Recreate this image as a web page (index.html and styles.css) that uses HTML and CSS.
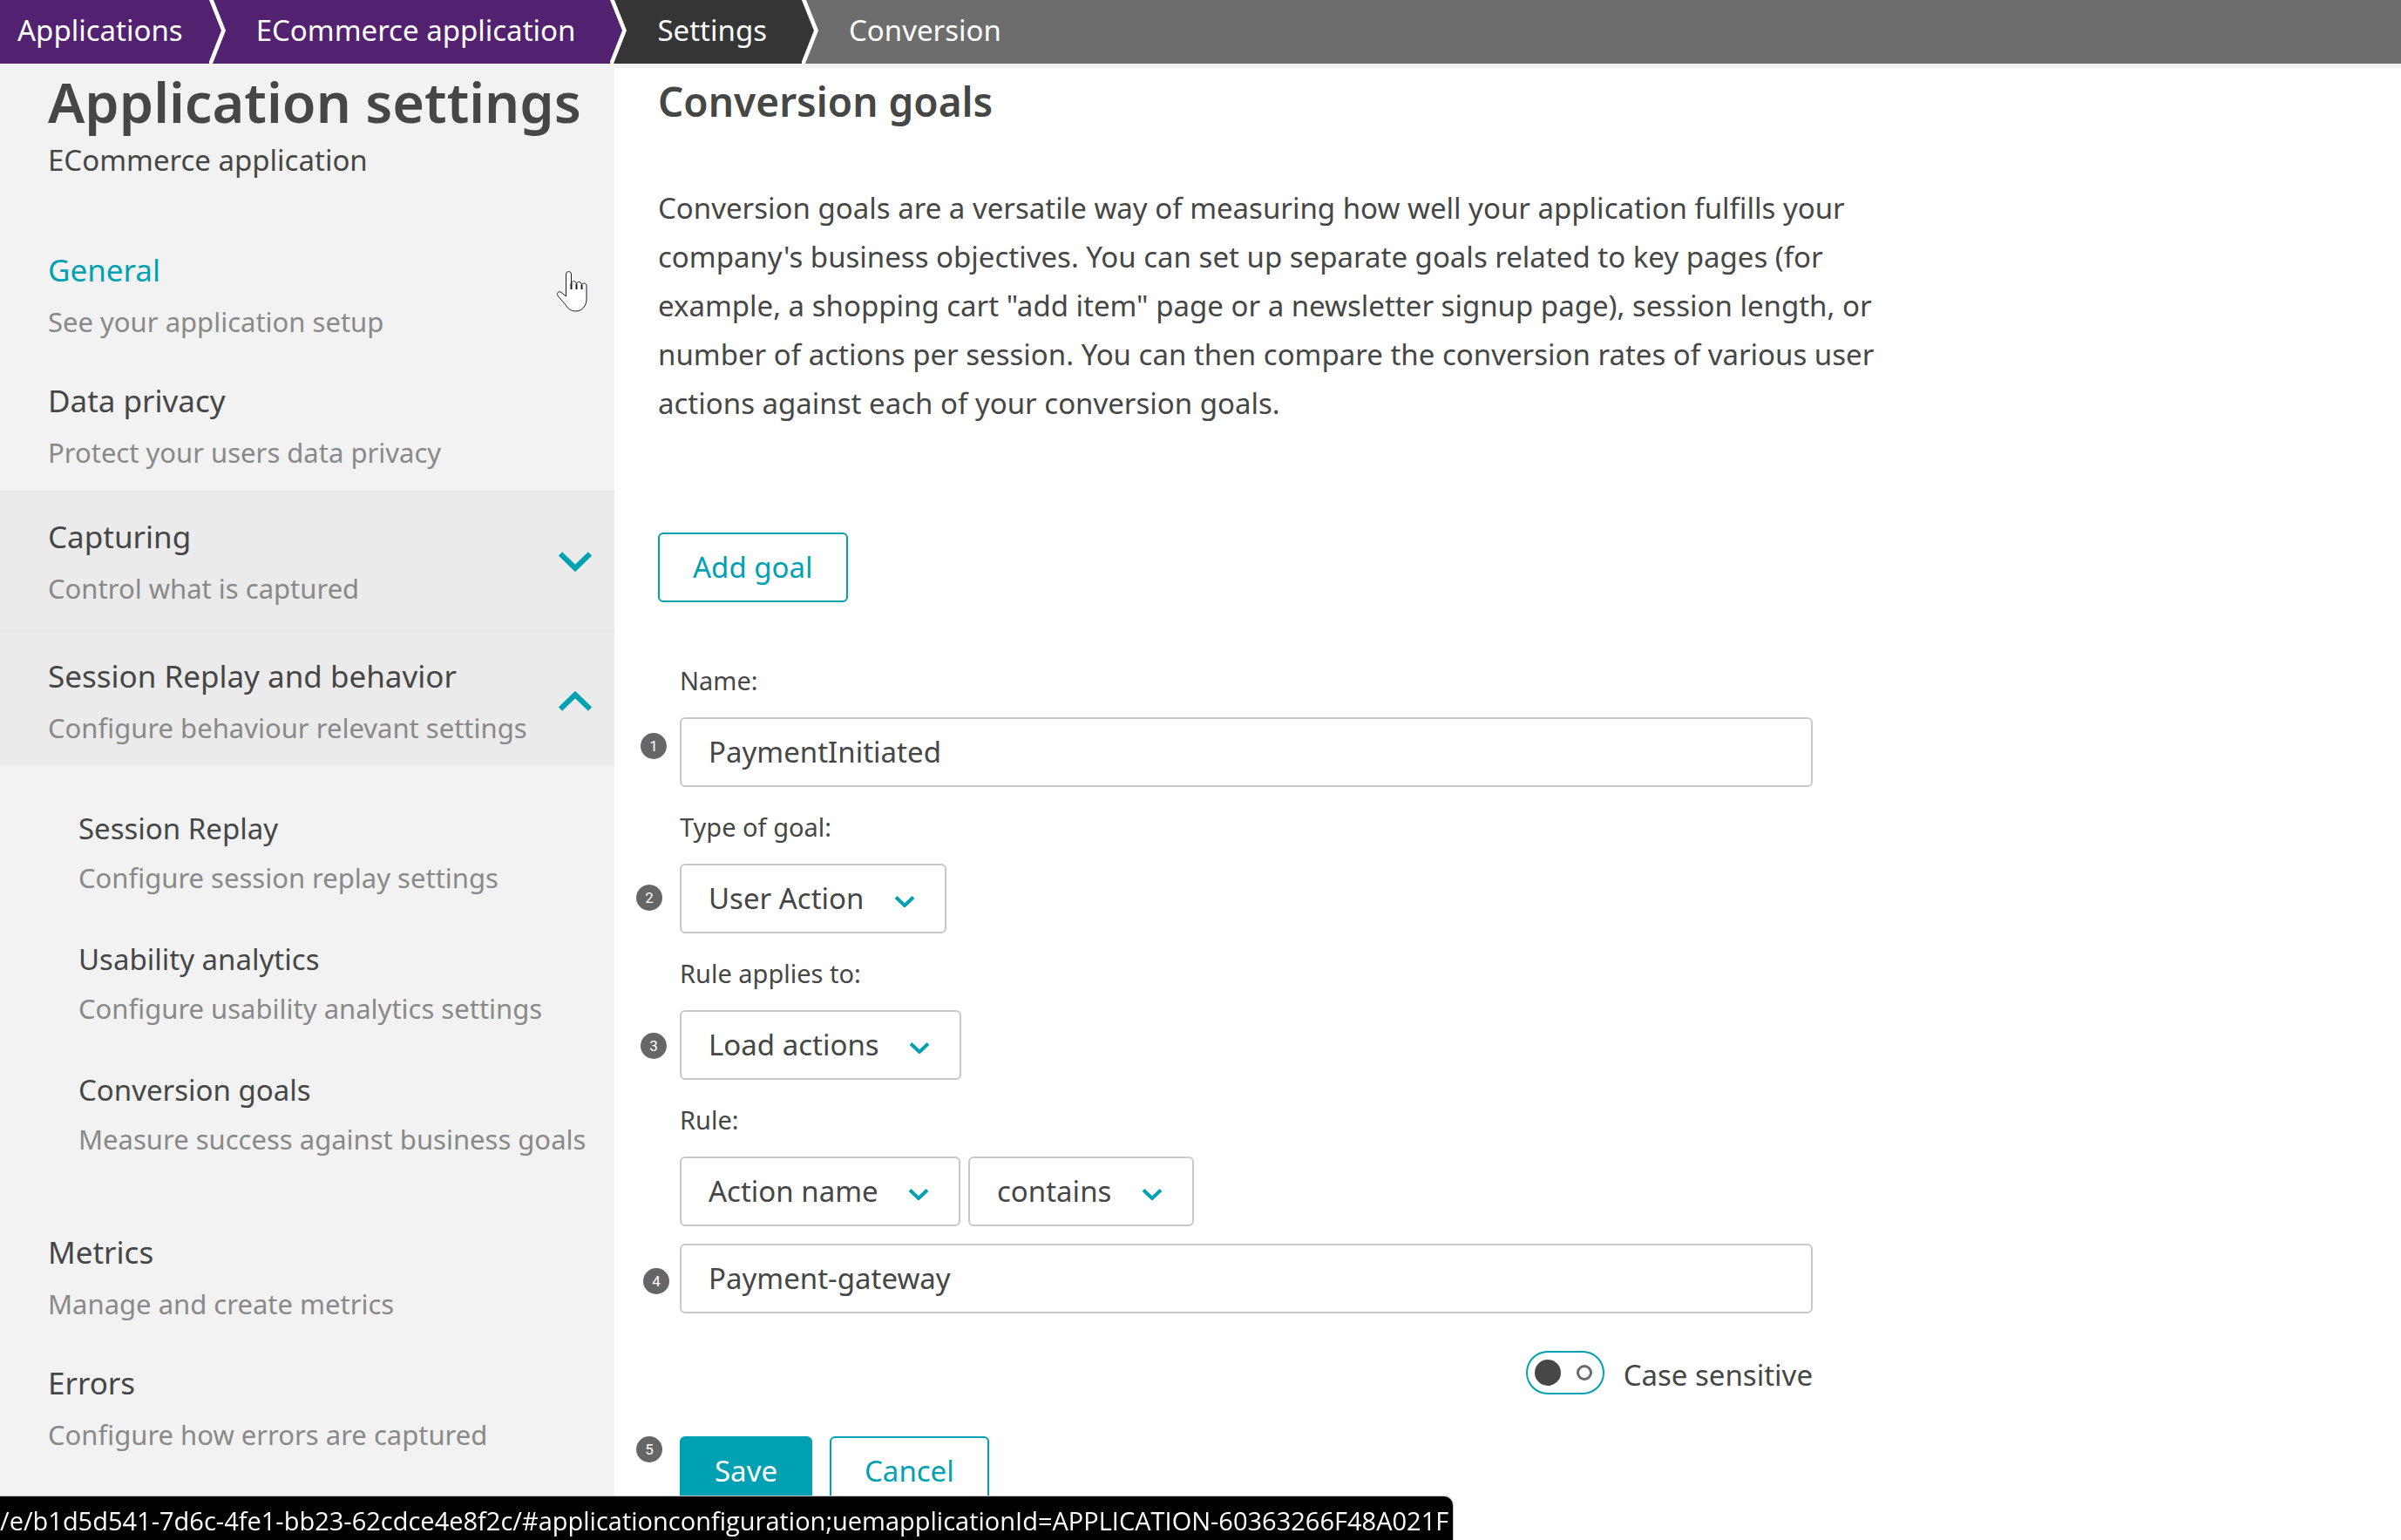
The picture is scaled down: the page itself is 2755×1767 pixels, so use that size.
FILE: index.html
```html
<!DOCTYPE html>
<html lang="en">
<head>
<meta charset="utf-8">
<title>Conversion goals - Application settings</title>
<link rel="stylesheet" href="styles.css">
</head>
<body>
<nav class="breadcrumb" aria-label="Breadcrumb">
  <a class="crumb crumb-app crumb-first" href="#applications">Applications</a>
  <svg class="crumb-sep sep-app" viewBox="0 0 19 73" aria-hidden="true"><path class="fill-app" d="M0 0L14 35L0 73Z"/><path class="fill-line" d="M0 0H5L19 35L4 73H-1L14 35Z"/></svg>
  <a class="crumb crumb-app" href="#ecommerce">ECommerce application</a>
  <svg class="crumb-sep sep-settings" viewBox="0 0 19 73" aria-hidden="true"><path class="fill-app" d="M0 0L14 35L0 73Z"/><path class="fill-line" d="M0 0H5L19 35L4 73H-1L14 35Z"/></svg>
  <a class="crumb crumb-settings" href="#settings">Settings</a>
  <svg class="crumb-sep sep-current" viewBox="0 0 19 73" aria-hidden="true"><path class="fill-settings" d="M0 0L14 35L0 73Z"/><path class="fill-line" d="M0 0H5L19 35L4 73H-1L14 35Z"/></svg>
  <a class="crumb" href="#conversion" aria-current="page">Conversion</a>
</nav>

<div class="layout">
  <aside class="sidebar">
    <header class="sidebar-head">
      <h1 class="sidebar-title">Application settings</h1>
      <p class="sidebar-subtitle">ECommerce application</p>
    </header>
    <nav aria-label="Settings">
      <a class="nav-item" href="#general">
        <span class="nav-title nav-title-active">General</span>
        <span class="nav-desc">See your application setup</span>
        <svg class="pointer" viewBox="0 0 37 48" aria-hidden="true">
          <path class="pointer-hand" d="M11.500 30V5a3 3.500 0 0 1 6 0V16C18 11.500 23 11.500 23.500 16C24 12.500 29 12.500 29.500 17C30.500 14 35 14.500 35 18V33C35 41 30 47 22.500 47C16 47 13 43 10.500 39L2.500 30C0 26 3 23.500 6 25.500Z"/>
          <path class="pointer-lines" d="M17.500 15V22M23.500 16V22M29.500 17V22"/>
        </svg>
      </a>
      <a class="nav-item" href="#privacy">
        <span class="nav-title">Data privacy</span>
        <span class="nav-desc">Protect your users data privacy</span>
      </a>
      <button class="nav-group" type="button" aria-expanded="false">
        <span class="nav-group-text">
          <span class="nav-title">Capturing</span>
          <span class="nav-desc">Control what is captured</span>
        </span>
        <svg class="nav-chevron" viewBox="0 0 38 23" aria-hidden="true"><path d="M2 2.500L19 19L36 2.500"/></svg>
      </button>
      <button class="nav-group nav-group-open" type="button" aria-expanded="true">
        <span class="nav-group-text">
          <span class="nav-title">Session Replay and behavior</span>
          <span class="nav-desc">Configure behaviour relevant settings</span>
        </span>
        <svg class="nav-chevron" viewBox="0 0 38 23" aria-hidden="true"><path d="M2 20.500L19 4L36 20.500"/></svg>
      </button>
      <div class="subnav">
        <a class="subnav-item" href="#replay">
          <span class="subnav-title">Session Replay</span>
          <span class="nav-desc">Configure session replay settings</span>
        </a>
        <a class="subnav-item" href="#usability">
          <span class="subnav-title">Usability analytics</span>
          <span class="nav-desc">Configure usability analytics settings</span>
        </a>
        <a class="subnav-item" href="#goals">
          <span class="subnav-title">Conversion goals</span>
          <span class="nav-desc">Measure success against business goals</span>
        </a>
      </div>
      <a class="nav-item" href="#metrics">
        <span class="nav-title">Metrics</span>
        <span class="nav-desc">Manage and create metrics</span>
      </a>
      <a class="nav-item" href="#errors">
        <span class="nav-title">Errors</span>
        <span class="nav-desc">Configure how errors are captured</span>
      </a>
    </nav>
  </aside>

  <main class="content">
    <h2 class="content-title">Conversion goals</h2>
    <p class="intro">Conversion goals are a versatile way of measuring how well your application fulfills your company's business objectives. You can set up separate goals related to key pages (for example, a shopping cart "add item" page or a newsletter signup page), session length, or number of actions per session. You can then compare the conversion rates of various user actions against each of your conversion goals.</p>
    <button class="button" type="button">Add goal</button>

    <form class="goal-form">
      <label class="label" for="goal-name">Name:</label>
      <div class="row">
        <span class="pin pin-1">1</span>
        <input class="input" id="goal-name" type="text" value="PaymentInitiated">
      </div>

      <label class="label" for="goal-type">Type of goal:</label>
      <div class="row">
        <span class="pin pin-2">2</span>
        <span class="select-wrap">
          <select class="select" id="goal-type"><option>User Action</option></select>
          <svg class="select-chevron" viewBox="0 0 22 13" aria-hidden="true"><path d="M1 1.500L11 11L21 1.500"/></svg>
        </span>
      </div>

      <label class="label" for="rule-scope">Rule applies to:</label>
      <div class="row">
        <span class="pin pin-3">3</span>
        <span class="select-wrap">
          <select class="select" id="rule-scope"><option>Load actions</option></select>
          <svg class="select-chevron" viewBox="0 0 22 13" aria-hidden="true"><path d="M1 1.500L11 11L21 1.500"/></svg>
        </span>
      </div>

      <label class="label" for="rule-field">Rule:</label>
      <div class="row">
        <span class="select-wrap">
          <select class="select" id="rule-field"><option>Action name</option></select>
          <svg class="select-chevron" viewBox="0 0 22 13" aria-hidden="true"><path d="M1 1.500L11 11L21 1.500"/></svg>
        </span>
        <span class="select-wrap">
          <select class="select" aria-label="Rule operator"><option>contains</option></select>
          <svg class="select-chevron" viewBox="0 0 22 13" aria-hidden="true"><path d="M1 1.500L11 11L21 1.500"/></svg>
        </span>
      </div>
      <div class="row row-value">
        <span class="pin pin-4">4</span>
        <input class="input" type="text" value="Payment-gateway" aria-label="Rule value">
      </div>

      <label class="switch" for="case-sensitive">
        <input class="switch-input" id="case-sensitive" type="checkbox" role="switch">
        <span class="switch-text">Case sensitive</span>
      </label>

      <div class="row row-actions">
        <span class="pin pin-5">5</span>
        <button class="button button-primary" type="button">Save</button>
        <button class="button" type="button">Cancel</button>
      </div>
    </form>
  </main>
</div>

<div class="status"><span class="status-text">/e/b1d5d541-7d6c-4fe1-bb23-62cdce4e8f2c/#applicationconfiguration;uemapplicationId=APPLICATION-60363266F48A021F</span></div>
</body>
</html>
```
FILE: styles.css
```css
:root {
  --text: #454646;
  --muted: #898989;
  --teal: #00a1b2;
  --panel: #f2f2f2;
  --border: #c9c9c9;
  --app: #522270;
  --settings: #353535;
  --current: #6d6d6d;
}

*, *::before, *::after { box-sizing: border-box; }

body {
  margin: 0;
  min-height: 100vh;
  display: flex;
  flex-direction: column;
  background: #fff;
  color: var(--text);
  font: 33px/44px "Noto Sans", sans-serif;
}

a { color: inherit; text-decoration: none; }
h1, h2, p { margin: 0; }

button, input, select {
  margin: 0;
  color: inherit;
  font: inherit;
}

/* Breadcrumb */
.breadcrumb {
  display: flex;
  height: 78px;
  background: var(--current);
  border-bottom: 5px solid var(--panel);
  color: #fff;
}
.crumb {
  display: flex;
  align-items: center;
  padding: 0 40px 4px 35px;
}
.crumb-first { padding-left: 20px; padding-right: 30px; }
.crumb-app { background: var(--app); }
.crumb-settings { background: var(--settings); }
.crumb-sep { flex: none; width: 19px; height: 73px; }
.sep-app { background: var(--app); }
.sep-settings { background: var(--settings); }
.sep-current { background: var(--current); }
.fill-app { fill: var(--app); }
.fill-settings { fill: var(--settings); }
.fill-line { fill: #fff; }

.layout { display: flex; flex: 1; }

/* Sidebar */
.sidebar {
  flex: 0 0 705px;
  background: var(--panel);
}
.sidebar-head { padding: 0 0 57px 55px; }
.sidebar-title {
  margin-bottom: 6px;
  font-size: 63px;
  font-weight: 600;
  line-height: 78px;
  white-space: nowrap;
}
.nav-item {
  position: relative;
  display: block;
  padding: 23px 26px 23px 55px;
}
.nav-title {
  display: block;
  margin-bottom: 14px;
  font-size: 35px;
  line-height: 48px;
}
.nav-title-active { color: var(--teal); }
.nav-desc {
  display: block;
  color: var(--muted);
  font-size: 31px;
  line-height: 42px;
}
.nav-group {
  display: flex;
  align-items: center;
  justify-content: space-between;
  width: 100%;
  padding: 27px 26px 27px 55px;
  border: 0;
  border-top: 2px solid #e5e5e5;
  background: #ebebeb;
  text-align: left;
}
.nav-group-open { padding-bottom: 22px; }
.nav-chevron {
  flex: none;
  width: 38px;
  height: 23px;
  fill: none;
  stroke: var(--teal);
  stroke-width: 6;
}
.subnav {
  display: flex;
  flex-direction: column;
  gap: 51px;
  padding: 51px 0 62px 90px;
}
.subnav-title { display: block; margin-bottom: 13px; }
.pointer {
  position: absolute;
  top: 47px;
  right: 30px;
  width: 37px;
  height: 48px;
}
.pointer-hand { fill: #fff; stroke: #1b1b2b; stroke-width: 1; }
.pointer-lines { fill: none; stroke: #1b1b2b; stroke-width: 2; }

/* Content */
.content {
  flex: 1;
  min-width: 0;
  padding: 8px 50px 30px;
}
.content-title {
  margin-bottom: 65px;
  font-size: 46px;
  font-weight: 600;
  line-height: 60px;
}
.intro {
  max-width: 1420px;
  margin-bottom: 120px;
  line-height: 56px;
}
.button {
  height: 80px;
  padding: 0 38px;
  border: 2px solid var(--teal);
  border-radius: 6px;
  background: #fff;
  color: var(--teal);
}
.button-primary { background: var(--teal); color: #fff; }

.goal-form {
  max-width: 1325px;
  margin-top: 70px;
  padding-left: 25px;
}
.label {
  display: block;
  margin-bottom: 22px;
  font-size: 29px;
  line-height: 40px;
}
.row {
  position: relative;
  display: flex;
  gap: 9px;
  margin-bottom: 26px;
}
.row-value { margin: -6px 0 43px; }
.input, .select {
  height: 80px;
  border: 2px solid var(--border);
  border-radius: 6px;
  background: #fff;
}
.input { width: 100%; padding: 0 31px 2px; }
.select { appearance: none; padding: 0 92px 0 31px; }
.select-wrap { position: relative; display: flex; }
.select-chevron {
  position: absolute;
  top: 37px;
  right: 37px;
  width: 22px;
  height: 13px;
  fill: none;
  stroke: var(--teal);
  stroke-width: 4;
  pointer-events: none;
}

.switch {
  display: flex;
  align-items: center;
  justify-content: flex-end;
  gap: 22px;
  height: 50px;
  margin-bottom: 48px;
}
.switch-text { padding-top: 6px; }
.switch-input {
  appearance: none;
  display: flex;
  align-items: center;
  justify-content: space-between;
  width: 90px;
  height: 50px;
  padding: 0 12px 0 8px;
  border: 2px solid var(--teal);
  border-radius: 25px;
}
.switch-input::before {
  content: "";
  width: 30px;
  height: 30px;
  border-radius: 50%;
  background: var(--text);
}
.switch-input::after {
  content: "";
  width: 18px;
  height: 18px;
  border: 3px solid #6a6a6a;
  border-radius: 50%;
}
.row-actions { gap: 20px; margin-bottom: 0; }

/* Numbered callouts pinned over the form */
.pin {
  position: absolute;
  width: 30px;
  height: 30px;
  border-radius: 50%;
  background: #666;
  color: #fff;
  font: 17px/30px Roboto, sans-serif;
  text-align: center;
}
.pin-1 { top: 18px; left: -45px; }
.pin-2 { top: 24px; left: -50px; }
.pin-3 { top: 26px; left: -45px; }
.pin-4 { top: 28px; left: -42px; }
.pin-5 { top: 0; left: -50px; }

/* Link preview at the bottom of the window */
.status {
  position: fixed;
  bottom: 0;
  left: 0;
  max-width: 100%;
  height: 50px;
  padding: 6px 5px 0 0;
  overflow: hidden;
  border-radius: 0 10px 0 0;
  box-shadow: 0 0 0 1px #c8c8c8;
  background: #000;
  color: #fff;
  font: 29px/44px "Open Sans", sans-serif;
  white-space: nowrap;
}
```
